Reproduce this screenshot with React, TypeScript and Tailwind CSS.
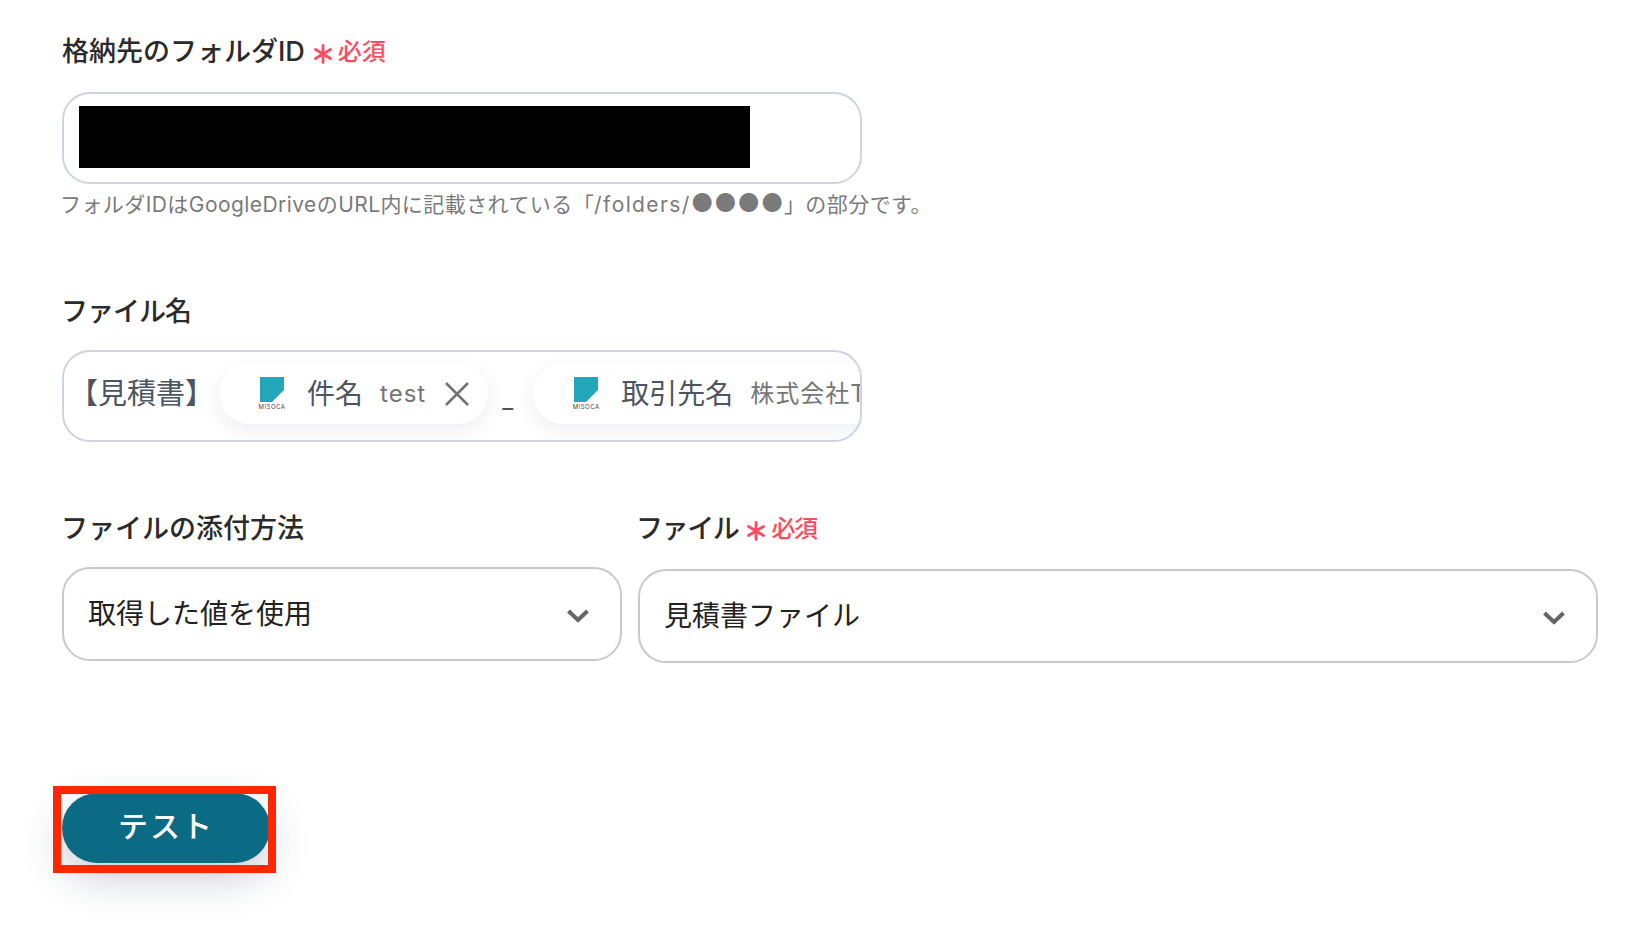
const font = "font-['Inter','Noto_Sans_CJK_JP',sans-serif]";

function Required() {
  return (
    <span className="ml-[8px] inline-flex items-center text-[24px] font-medium text-[#ff4b60]">
      <svg width="20" height="20" viewBox="0 0 20 20" className="mr-[5px] mt-[3px]" stroke="#ff4b60" strokeWidth="2.8" strokeLinecap="round">
        <path d="M10 1.5v17M2.5 5.5l15 9M17.5 5.5l-15 9" />
      </svg>
      必須
    </span>
  );
}

function Label({ children, className = "" }: { children: React.ReactNode; className?: string }) {
  return <div className={`flex h-[36px] items-center text-[27px] font-medium text-[#2b2b2b] ${className}`}>{children}</div>;
}

function MisocaLogo() {
  return (
    <div className="flex w-[26px] shrink-0 flex-col items-center">
      <svg width="24" height="25" viewBox="0 0 24 25">
        <polygon points="0,0 24,0 24,13 12,25 0,25" fill="#25a5b8" />
      </svg>
      <span className="mt-[1px] text-[6px] leading-[8px] tracking-[0.5px] text-[#444]">MISOCA</span>
    </div>
  );
}

function Chip({ name, value, close }: { name: string; value: string; close?: boolean }) {
  return (
    <div className="flex h-[61px] shrink-0 items-center rounded-full bg-white pl-[40px] pr-[18px] shadow-[0_6px_20px_rgba(30,40,60,0.08)]">
      <MisocaLogo />
      <span className="ml-[22px] whitespace-nowrap text-[28px] text-[#4d5560]">{name}</span>
      <span className="ml-[17px] whitespace-nowrap text-[24px] tracking-[1px] text-[#767676]">{value}</span>
      {close && (
        <svg width="26" height="26" viewBox="0 0 26 26" className="ml-[18px]" stroke="#737373" strokeWidth="2.6">
          <path d="M2 2l22 22M24 2L2 24" />
        </svg>
      )}
    </div>
  );
}

function Select({ text, className }: { text: string; className: string }) {
  return (
    <div className={`flex h-[94px] items-center justify-between rounded-[28px] border-2 border-[#c9c9c9] bg-white pl-[24px] pr-[31px] ${className}`}>
      <span className="text-[28px] text-[#222]">{text}</span>
      <svg width="22" height="14" viewBox="0 0 22 14" fill="none" stroke="#666" strokeWidth="4" className="mt-[4px]">
        <path d="M1.5 2l9.5 9 9.5-9" />
      </svg>
    </div>
  );
}

export default function App() {
  return (
    <div className={`relative h-[934px] w-[1652px] overflow-hidden bg-white pl-[62px] pt-[34px] ${font}`}>
      <Label>
        格納先のフォルダID
        <Required />
      </Label>
      <div className="mt-[22px] flex h-[92px] w-[800px] items-center rounded-[28px] border-2 border-[#cdd3e0] bg-white pl-[15px]">
        <div className="mb-[2px] h-[62px] w-[671px] bg-black" />
      </div>
      <p className="mt-[5px] -ml-[2px] h-[28px] whitespace-nowrap text-[21px] leading-[28px] tracking-[0.43px] text-[#7a7a7a]">
        フォルダIDはGoogleDriveのURL内に記載されている「<span className="tracking-[1.4px]">/folders/</span>
        <span className="text-[25px]">●●●●</span>」の部分です。
      </p>

      <div className="mt-[77px]">
        <Label className="-ml-[1px] tracking-[-1px]">ファイル名</Label>
      </div>
      <div className="mt-[20px] flex h-[92px] w-[800px] items-center overflow-hidden rounded-[28px] border-2 border-[#cdd3e0] bg-white">
        <span className="ml-[5px] mb-[5px] whitespace-nowrap text-[29px] text-[#4d5560]">【見積書】</span>
        <div className="mb-[5px] ml-[5px]">
          <Chip name="件名" value="test" close />
        </div>
        <span className="ml-[14px] mr-[20px] mt-[8px] shrink-0 text-[24px] text-[#4d5560]">_</span>
        <div className="mb-[5px]">
          <Chip name="取引先名" value="株式会社T" />
        </div>
      </div>

      <div className="mt-[69px] flex w-[1536px] gap-[16px]">
        <div className="w-[560px]">
          <Label className="-ml-[1px]">ファイルの添付方法</Label>
          <Select text="取得した値を使用" className="mt-[20px]" />
        </div>
        <div className="flex-1">
          <Label className="-ml-[2px] tracking-[-1.4px]">
            ファイル
            <Required />
          </Label>
          <Select text="見積書ファイル" className="mt-[22px]" />
        </div>
      </div>

      <button className="mt-[130px] flex h-[70px] w-[208px] items-center justify-center rounded-full bg-[#0b6b85] pb-[3px] text-[30px] font-medium tracking-[2px] text-white shadow-[0_14px_40px_rgba(30,50,70,0.25)]">
        テスト
      </button>
      <div className="absolute left-[53px] top-[786px] h-[87px] w-[223px] border-[8px] border-[#ff2600]" />
    </div>
  );
}
